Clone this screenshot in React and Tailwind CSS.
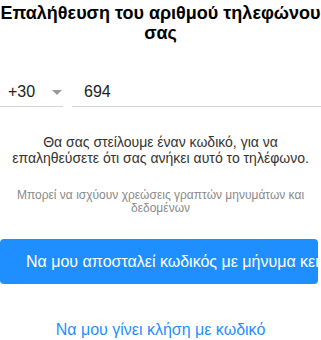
export default function App() {
  return (
    <div className="w-[321px] h-[340px] overflow-hidden bg-white font-['Liberation_Sans',Arial,sans-serif]">
      <h1 className="pt-[3px] text-center text-[18px] leading-[20px] font-bold text-black">
        Επαλήθευση του αριθμού τηλεφώνου σας
      </h1>

      <div className="mt-[34px] flex items-end gap-[9px]">
        <div className="relative w-[63px] h-[30px] border-b border-[#d6d6d6] flex items-center pl-[8px] text-[16px] text-[#222]">
          +30
          <span className="absolute left-[52px] top-[13px] w-0 h-0 border-l-[5px] border-r-[5px] border-t-[5px] border-l-transparent border-r-transparent border-t-[#999]" />
        </div>
        <div className="flex-1 h-[30px] border-b border-[#d6d6d6] flex items-center pl-[12px] text-[16px] text-[#222]">
          694
        </div>
      </div>

      <p className="mt-[27px] px-[8px] text-center text-[14px] leading-[16px] text-[#333]">
        Θα σας στείλουμε έναν κωδικό, για να επαληθεύσετε ότι σας ανήκει αυτό το τηλέφωνο.
      </p>

      <p className="mt-[23px] px-[12px] text-center text-[12px] leading-[13px] text-[#8a8a8a]">
        Μπορεί να ισχύουν χρεώσεις γραπτών μηνυμάτων και δεδομένων
      </p>

      <div className="mt-[24px] w-[318px] h-[45px] rounded-[4px] bg-[#1f8fff] overflow-hidden whitespace-nowrap flex items-center pl-[26px] text-[16px] text-white">
        Να μου αποσταλεί κωδικός με μήνυμα κειμένου
      </div>

      <div className="mt-[37px] text-center text-[16px] leading-[18px] text-[#1f8fff]">
        Να μου γίνει κλήση με κωδικό
      </div>
    </div>
  );
}
